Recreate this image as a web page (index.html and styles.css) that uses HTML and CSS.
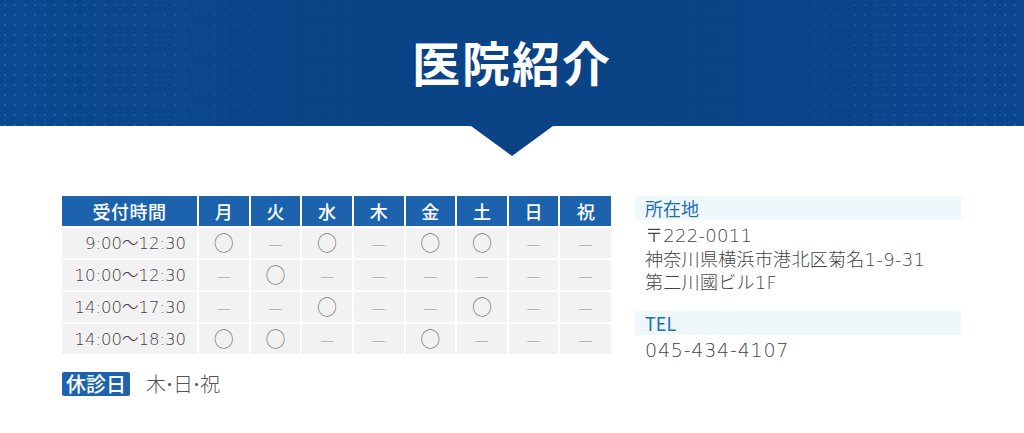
FILE: index.html
```html
<!DOCTYPE html>
<html lang="ja">
<head>
<meta charset="utf-8">
<title>医院紹介</title>
<link rel="stylesheet" href="styles.css">
</head>
<body>
<header class="hero">
  <h1 class="hero-title">医院紹介</h1>
</header>
<main class="content">
  <section class="schedule">
    <table class="timetable">
      <colgroup><col class="col-time"><col><col><col><col><col><col><col><col></colgroup>
      <thead>
        <tr><th>受付時間</th><th>月</th><th>火</th><th>水</th><th>木</th><th>金</th><th>土</th><th>日</th><th>祝</th></tr>
      </thead>
      <tbody>
        <tr><td class="time">9:00〜12:30</td><td class="o">○</td><td class="x">—</td><td class="o">○</td><td class="x">—</td><td class="o">○</td><td class="o">○</td><td class="x">—</td><td class="x">—</td></tr>
        <tr><td class="time">10:00〜12:30</td><td class="x">—</td><td class="o">○</td><td class="x">—</td><td class="x">—</td><td class="x">—</td><td class="x">—</td><td class="x">—</td><td class="x">—</td></tr>
        <tr><td class="time">14:00〜17:30</td><td class="x">—</td><td class="x">—</td><td class="o">○</td><td class="x">—</td><td class="x">—</td><td class="o">○</td><td class="x">—</td><td class="x">—</td></tr>
        <tr><td class="time">14:00〜18:30</td><td class="o">○</td><td class="o">○</td><td class="x">—</td><td class="x">—</td><td class="o">○</td><td class="x">—</td><td class="x">—</td><td class="x">—</td></tr>
      </tbody>
    </table>
    <p class="closed"><span class="badge">休診日</span><span class="closed-days">木･日･祝</span></p>
  </section>
  <section class="info">
    <h2 class="info-label">所在地</h2>
    <p class="info-text">〒222-0011<br>神奈川県横浜市港北区菊名1-9-31<br>第二川國ビル1F</p>
    <h2 class="info-label">TEL</h2>
    <p class="info-text info-tel">045-434-4107</p>
  </section>
</main>
</body>
</html>
```

FILE: styles.css
```css
* { box-sizing: border-box; }
html, body { margin: 0; padding: 0; background: #fff; }
body {
  font-family: "Noto Sans CJK JP", "Noto Sans", sans-serif;
  color: #555;
}
.hero {
  position: relative;
  height: 126px;
  background-color: #0b4387;
  background-image: linear-gradient(90deg, #0c4990 0%, #0b4387 30%, #0b4387 70%, #0c4690 100%);
  display: flex;
  align-items: center;
  justify-content: center;
}
.hero::before {
  content: "";
  position: absolute;
  inset: 0;
  background-image: radial-gradient(circle, rgba(140,175,230,0.22) 1px, transparent 1.6px);
  background-size: 10px 10px;
  -webkit-mask-image: linear-gradient(90deg, #000 0%, rgba(0,0,0,0.35) 22%, transparent 40%, transparent 62%, rgba(0,0,0,0.4) 82%, #000 100%);
  mask-image: linear-gradient(90deg, #000 0%, rgba(0,0,0,0.35) 22%, transparent 40%, transparent 62%, rgba(0,0,0,0.4) 82%, #000 100%);
}
.hero::after {
  content: "";
  position: absolute;
  left: 50%;
  top: 126px;
  margin-left: -41px;
  border-left: 41px solid transparent;
  border-right: 41px solid transparent;
  border-top: 30px solid #0b4387;
}
.hero-title {
  position: relative;
  margin: 0 0 4px;
  color: #fff;
  font-size: 48px;
  font-weight: 700;
  letter-spacing: 2px;
  line-height: 1;
}
.content {
  width: 900px;
  margin: 0 auto;
  padding-top: 70px;
  display: flex;
  gap: 24px;
}
.schedule { width: 549px; flex: none; }
.timetable {
  width: 549px;
  table-layout: fixed;
  border-collapse: collapse;
}
.col-time { width: 136px; }
.timetable th, .timetable td {
  border: 2px solid #fff;
  height: 32px;
  padding: 0;
  text-align: center;
  line-height: 1;
}
.timetable tr > :first-child { border-left: 0; }
.timetable tr > :last-child { border-right: 0; }
.timetable thead th {
  border-top: 0;
  background: #1c62ad;
  color: #fff;
  font-size: 18px;
  font-weight: 500;
  height: 31px;
}
.timetable thead th:first-child { letter-spacing: 0.5px; }
.timetable td { background: #f2f2f2; font-size: 16px; }
.timetable td.time {
  text-align: right;
  padding: 2px 11px 0 0;
  color: #444;
  font-family: "DejaVu Sans", "Noto Sans CJK JP", sans-serif;
  font-weight: 300;
  font-size: 16.5px;
}
.timetable td.o { color: #777; font-size: 20px; font-weight: 300; }
.timetable td.x { color: #aaa; font-size: 16px; font-weight: 300; }
.closed {
  margin: 13px 0 0;
  display: flex;
  align-items: center;
  gap: 16px;
  font-size: 20px;
}
.badge {
  background: #1c62ad;
  color: #fff;
  padding: 0 4px;
  height: 24px;
  line-height: 24px;
  border-radius: 2px;
  font-weight: 500;
}
.closed-days { color: #555; font-weight: 300; letter-spacing: -1.5px; }
.info { width: 326px; flex: none; }
.info-label {
  margin: 0;
  height: 24px;
  line-height: 24px;
  background: #eef7fa;
  color: #1f6db5;
  font-size: 18px;
  font-weight: 400;
  padding-left: 10px;
}
.info-text {
  margin: 4px 0 16px 10px;
  font-family: "DejaVu Sans", "Noto Sans CJK JP", sans-serif;
  font-weight: 300;
  font-size: 18px;
  letter-spacing: 0.3px;
  line-height: 23.5px;
  color: #444;
}
.info-text.info-tel { font-size: 19px; letter-spacing: 0.8px; }
```
